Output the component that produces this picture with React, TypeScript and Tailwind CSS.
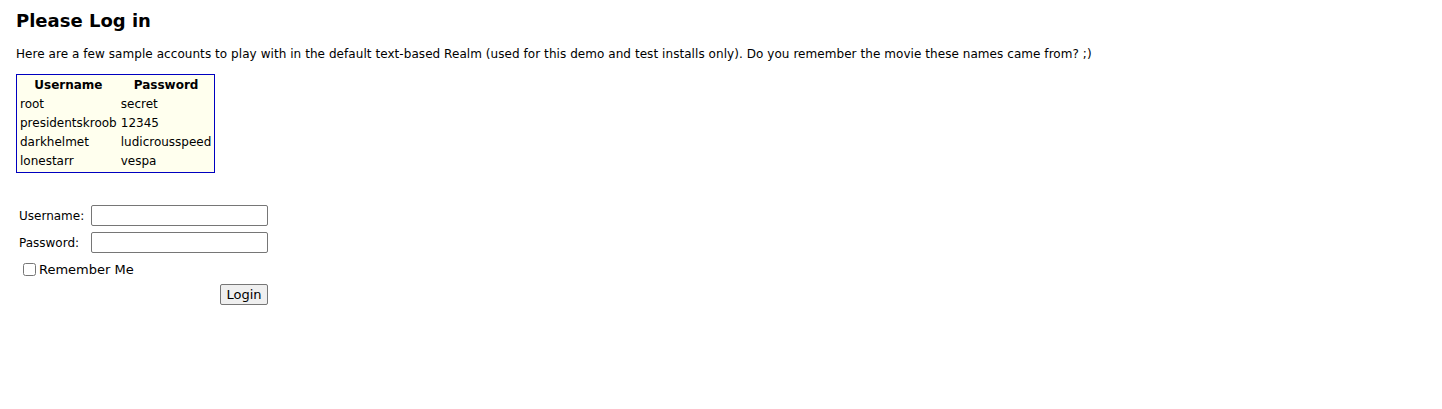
const accounts = [
  { username: "root", password: "secret" },
  { username: "presidentskroob", password: "12345" },
  { username: "darkhelmet", password: "ludicrousspeed" },
  { username: "lonestarr", password: "vespa" },
];

export default function App() {
  return (
    <div className="min-h-[409px] bg-white px-4 pt-[10px] text-black font-['DejaVu_Sans',Verdana,sans-serif]">
      <h1 className="text-[18px] font-bold leading-[22px]">Please Log in</h1>
      <p className="mt-[15px] text-[12px] leading-[15px] tracking-[0.06px]">
        Here are a few sample accounts to play with in the default text-based Realm (used for this demo and test installs only). Do you remember the movie these names came from? ;)
      </p>

      <table className="mt-[12px] border-separate border-spacing-[2px] border border-[#0000c0] bg-[#ffffee] text-[12px] leading-[15px]">
        <thead>
          <tr>
            <th className="p-px font-bold">Username</th>
            <th className="p-px font-bold">Password</th>
          </tr>
        </thead>
        <tbody>
          {accounts.map((a) => (
            <tr key={a.username}>
              <td className="p-px">{a.username}</td>
              <td className="p-px">{a.password}</td>
            </tr>
          ))}
        </tbody>
      </table>

      <form className="mt-[32px] ml-[3px] flex w-[252px] flex-col text-[12px]">
        <div className="flex items-center h-[21px]">
          <label className="w-[72px]">Username:</label>
          <input type="text" className="h-[21px] w-[177px] rounded-[2px] border border-[#767676] bg-white px-1" />
        </div>
        <div className="mt-[6px] flex items-center h-[21px]">
          <label className="w-[72px]">Password:</label>
          <input type="password" className="h-[21px] w-[177px] rounded-[2px] border border-[#767676] bg-white px-1" />
        </div>
        <label className="mt-[6px] ml-[4px] flex items-center gap-[3px] text-[13px]">
          <input type="checkbox" className="h-[13px] w-[13px] m-0" />
          <span className="pt-px">Remember Me</span>
        </label>
        <div className="mt-[4px] flex justify-end pr-[3px]">
          <button type="button" className="h-[21px] w-[48px] rounded-[2px] border border-[#767676] bg-[#efefef] text-[13px] leading-none">
            Login
          </button>
        </div>
      </form>
    </div>
  );
}
